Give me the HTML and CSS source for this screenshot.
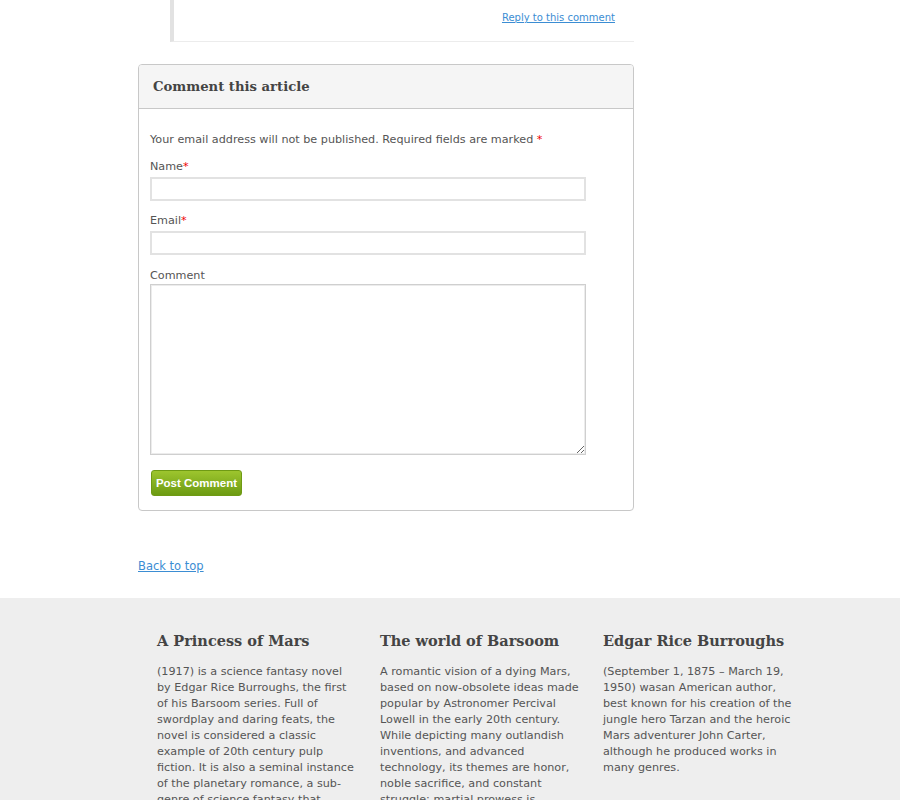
FILE: index.html
```html
<!DOCTYPE html>
<html>
<head>
<meta charset="utf-8">
<link rel="stylesheet" href="styles.css">
</head>
<body>
<div class="page">
  <div class="reply-block">
    <a href="#" class="reply-link">Reply to this comment</a>
  </div>

  <div class="comment-box">
    <div class="comment-head">
      <h3>Comment this article</h3>
    </div>
    <form class="comment-body">
      <p class="note">Your email address will not be published. Required fields are marked <span class="req">*</span></p>
      <label class="lbl">Name<span class="req">*</span></label>
      <input class="field" type="text">
      <label class="lbl">Email<span class="req">*</span></label>
      <input class="field" type="text">
      <label class="lbl lbl-area">Comment</label>
      <textarea class="area"></textarea>
      <button type="button" class="btn">Post Comment</button>
    </form>
  </div>

  <a href="#" class="back-top">Back to top</a>
</div>

<footer class="footer">
  <div class="footer-inner">
    <div class="col">
      <h4>A Princess of Mars</h4>
      <p>(1917) is a science fantasy novel by Edgar Rice Burroughs, the first of his Barsoom series. Full of swordplay and daring feats, the novel is considered a classic example of 20th century pulp fiction. It is also a seminal instance of the planetary romance, a sub-genre of science fantasy that became highly popular.</p>
    </div>
    <div class="col">
      <h4>The world of Barsoom</h4>
      <p>A romantic vision of a dying Mars, based on now-obsolete ideas made popular by Astronomer Percival Lowell in the early 20th century. While depicting many outlandish inventions, and advanced technology, its themes are honor, noble sacrifice, and constant struggle; martial prowess is paramount.</p>
    </div>
    <div class="col">
      <h4>Edgar Rice Burroughs</h4>
      <p>(September 1, 1875 – March 19, 1950) wasan American author, best known for his creation of the jungle hero Tarzan and the heroic Mars adventurer John Carter, although he produced works in many genres.</p>
    </div>
  </div>
</footer>
</body>
</html>
```

FILE: styles.css
```css
html, body {
  margin: 0;
  padding: 0;
  background: #fff;
}
body {
  font-family: "DejaVu Sans", Verdana, sans-serif;
  font-size: 11.2px;
  color: #555;
}
.page {
  width: 496px;
  margin-left: 138px;
}
.reply-block {
  margin-left: 32px;
  height: 42px;
  box-sizing: border-box;
  border-left: 4px solid #e2e2e2;
  border-bottom: 1px solid #ececec;
  display: flex;
  justify-content: flex-end;
  align-items: flex-start;
  padding-right: 19px;
}
.reply-link {
  margin-top: 12px;
  font-size: 10px;
  color: #3b8dd3;
  text-decoration: underline;
}
.comment-box {
  margin-top: 22px;
  border: 1px solid #c8c8c8;
  border-radius: 4px;
  overflow: hidden;
}
.comment-head {
  background: #f5f5f5;
  border-bottom: 1px solid #c8c8c8;
  height: 43px;
  display: flex;
  align-items: center;
  padding-left: 14px;
}
.comment-head h3 {
  margin: 0;
  font-family: "DejaVu Serif", Georgia, serif;
  font-size: 13.2px;
  font-weight: bold;
  color: #444;
}
.comment-body {
  display: flex;
  flex-direction: column;
  align-items: flex-start;
  padding: 24px 11px 14px 11px;
}
.note {
  margin: 0 0 14px 0;
  line-height: 13px;
  color: #555;
}
.req {
  color: #e00;
}
.lbl {
  line-height: 13px;
  color: #555;
  margin-bottom: 4px;
}
.lbl-area {
  margin-top: 1px;
  margin-bottom: 2px;
}
.field {
  width: 436px;
  height: 24px;
  box-sizing: border-box;
  border: 2px solid #e2e2e2;
  background: #fff;
  margin: 0 0 13px 0;
  padding: 0;
}
.area {
  width: 436px;
  height: 171px;
  box-sizing: border-box;
  border: 1px solid #cfcfcf;
  box-shadow: inset 0 0 0 1px #ececec;
  margin: 0 0 15px 0;
  padding: 0;
  resize: vertical;
}
.btn {
  margin-left: 1px;
  width: 91px;
  height: 26px;
  border: 1px solid #6f9a14;
  border-radius: 3px;
  background: linear-gradient(#9dc52e, #6c9b12);
  color: #fff;
  font-family: "Liberation Sans", Arial, sans-serif;
  font-weight: bold;
  font-size: 11.5px;
  padding: 0;
}
.back-top {
  display: inline-block;
  margin-top: 48px;
  margin-bottom: 25px;
  font-size: 11.5px;
  line-height: 14px;
  color: #3b8dd3;
  text-decoration: underline;
}
.footer {
  background: #eee;
  height: 202px;
  overflow: hidden;
}
.footer-inner {
  display: flex;
  gap: 23px;
  padding-left: 157px;
  padding-top: 34px;
}
.col {
  width: 200px;
}
.col h4 {
  margin: 0 0 15px 0;
  font-family: "DejaVu Serif", Georgia, serif;
  font-size: 14.5px;
  line-height: 17px;
  font-weight: bold;
  color: #444;
  white-space: nowrap;
}
.col p {
  margin: 0;
  line-height: 16px;
  color: #555;
}
```
